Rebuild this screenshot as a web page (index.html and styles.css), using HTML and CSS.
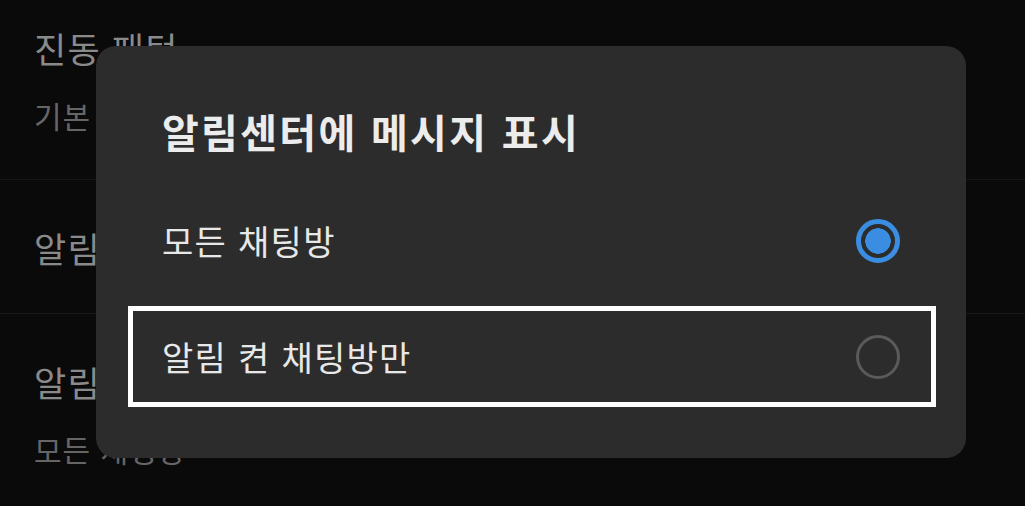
FILE: index.html
```html
<!DOCTYPE html>
<html lang="ko">
<head>
<meta charset="utf-8">
<title>알림센터에 메시지 표시</title>
<link rel="stylesheet" href="styles.css">
</head>
<body>
<div class="screen">
  <div class="list">
    <div class="item">
      <div class="item-title">진동 패턴</div>
      <div class="item-sub">기본 진동</div>
    </div>
    <div class="item">
      <div class="item-title">알림음</div>
    </div>
    <div class="item">
      <div class="item-title">알림센터에 메시지 표시</div>
      <div class="item-sub">모든 채팅방</div>
    </div>
  </div>

  <div class="dialog">
    <div class="dialog-title">알림센터에 메시지 표시</div>
    <div class="options">
      <div class="option">
        <span class="option-label">모든 채팅방</span>
        <span class="radio radio-on"></span>
      </div>
      <div class="option option-focus">
        <span class="option-label">알림 켠 채팅방만</span>
        <span class="radio"></span>
      </div>
    </div>
  </div>
</div>
</body>
</html>
```

FILE: styles.css
```css
* { box-sizing: border-box; }

html, body {
  margin: 0;
  padding: 0;
  background: #0a0a0a;
}

body {
  font-family: "Noto Sans CJK KR", "Noto Sans", sans-serif;
  width: 1025px;
  height: 506px;
  overflow: hidden;
}

.screen {
  position: relative;
  width: 1025px;
  height: 506px;
  overflow: hidden;
}

.list {
  margin-top: -20px;
}

.item {
  padding: 48px 0 45px 34px;
  border-bottom: 1px solid #171717;
}

.item-title {
  font-size: 35px;
  line-height: 40px;
  letter-spacing: 1.2px;
  color: #8a8a8a;
}

.item-sub {
  margin-top: 28px;
  font-size: 30px;
  line-height: 38px;
  letter-spacing: 1px;
  color: #666666;
}

.dialog {
  position: absolute;
  left: 96px;
  top: 46px;
  width: 870px;
  height: 412px;
  background: #2c2c2c;
  border-radius: 20px;
  padding: 62px 30px 0 32px;
}

.dialog-title {
  padding-left: 34px;
  font-size: 40px;
  line-height: 46px;
  font-weight: 700;
  letter-spacing: 2.3px;
  color: #ececec;
}

.options {
  margin-top: 36px;
  display: flex;
  flex-direction: column;
  gap: 15px;
}

.option {
  height: 101px;
  display: flex;
  align-items: center;
  justify-content: space-between;
  border: 5px solid transparent;
  padding-left: 29px;
  padding-right: 31px;
}

.option-focus {
  border-color: #ffffff;
}

.option-label {
  font-size: 34px;
  line-height: 40px;
  letter-spacing: 1.3px;
  color: #e8e8e8;
}

.radio {
  width: 44px;
  height: 44px;
  border-radius: 50%;
  border: 3px solid #5a5a5a;
  flex: none;
}

.radio-on {
  border: 5px solid #3a8de0;
  background: radial-gradient(circle, #3a8de0 0 12.5px, transparent 13px);
}
```
